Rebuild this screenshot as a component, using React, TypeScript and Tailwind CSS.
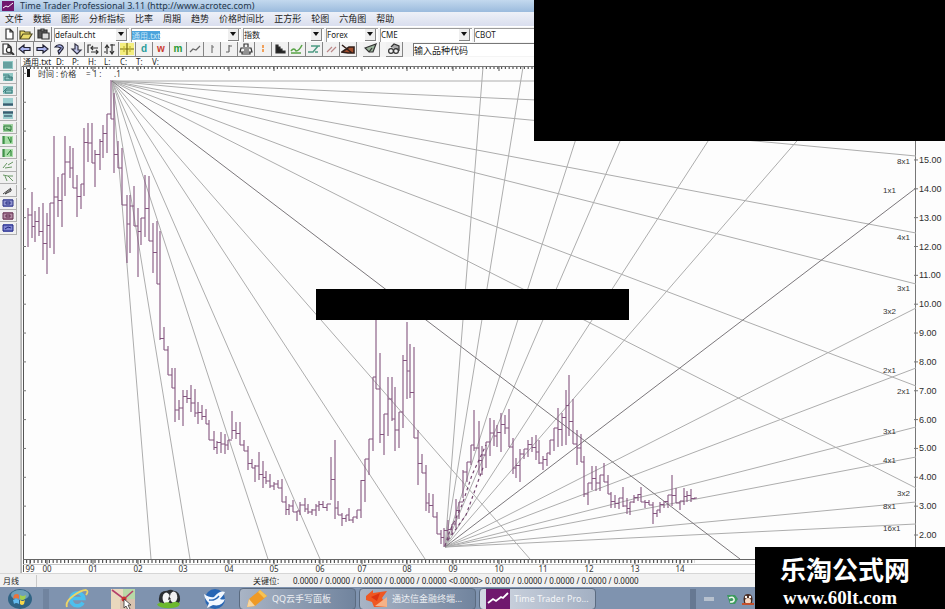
import React from 'react'
import clsx from 'clsx'

const sans = "font-['Noto_Sans','Noto_Sans_CJK_SC',sans-serif]"

const menus = ['文件', '数据', '图形', '分析指标', '比率', '周期', '趋势', '价格时间比', '正方形', '轮图', '六角图', '帮助']

// one entry per bar: x, high, low
const bars: number[][] = [
  [28, 208, 247], [32, 192, 238], [35, 211, 242], [39, 207, 236], [43, 203, 260], [47, 213, 274], [50, 203, 248], [54, 136, 254],
  [58, 177, 217], [62, 174, 227], [65, 136, 196], [70, 146, 178], [73, 148, 188], [77, 175, 217], [81, 184, 209], [84, 128, 196],
  [88, 123, 162], [92, 123, 163], [95, 150, 187], [100, 139, 170], [103, 125, 158], [107, 114, 153], [111, 80, 119], [114, 93, 173],
  [118, 141, 168], [122, 148, 205], [127, 195, 263], [130, 195, 253], [134, 186, 226], [138, 208, 277], [141, 218, 245], [145, 175, 237],
  [149, 176, 241], [153, 223, 273], [157, 221, 284], [160, 231, 340], [164, 327, 350], [168, 346, 375], [172, 368, 388], [175, 368, 422],
  [179, 400, 420], [183, 390, 426], [187, 390, 403], [191, 385, 412], [195, 389, 417], [198, 402, 424], [202, 405, 420], [206, 409, 424],
  [209, 420, 440], [214, 431, 450], [217, 441, 454], [221, 432, 453], [225, 434, 454], [228, 440, 450], [232, 411, 439], [236, 422, 439],
  [240, 422, 445], [244, 440, 451], [248, 446, 470], [252, 459, 468], [255, 465, 482], [259, 452, 480], [263, 461, 488], [266, 471, 484],
  [270, 474, 488], [274, 482, 490], [278, 480, 488], [282, 479, 502], [286, 496, 515], [289, 504, 515], [293, 500, 512], [297, 511, 521],
  [300, 502, 515], [305, 498, 512], [308, 504, 514], [312, 509, 515], [316, 504, 516], [319, 501, 511], [323, 501, 508], [327, 504, 511],
  [331, 457, 500], [335, 440, 519], [338, 501, 515], [342, 513, 526], [346, 515, 522], [349, 508, 521], [353, 517, 523], [357, 510, 519],
  [361, 480, 518], [365, 459, 502], [369, 439, 475], [373, 377, 451], [376, 320, 389], [380, 353, 443], [384, 414, 455], [388, 377, 436],
  [392, 377, 421], [395, 387, 451], [399, 412, 448], [403, 355, 428], [407, 322, 399], [410, 344, 398], [414, 347, 438], [418, 430, 485],
  [422, 454, 473], [426, 465, 511], [429, 493, 513], [433, 494, 517], [437, 512, 534], [441, 530, 544], [444, 528, 547], [448, 520, 541],
  [452, 524, 535], [456, 499, 528], [459, 502, 519], [463, 470, 498], [467, 462, 482], [471, 445, 465], [474, 410, 451], [479, 421, 475],
  [482, 446, 475], [486, 442, 468], [490, 418, 456], [494, 420, 446], [497, 425, 447], [501, 413, 452], [505, 415, 434], [509, 409, 447],
  [513, 438, 474], [516, 458, 478], [520, 449, 482], [524, 449, 459], [528, 440, 457], [532, 437, 452], [536, 435, 460], [539, 440, 464],
  [543, 456, 470], [547, 453, 466], [550, 440, 455], [554, 428, 451], [558, 408, 447], [562, 413, 446], [566, 390, 445], [569, 375, 436],
  [573, 399, 444], [577, 430, 465], [581, 434, 462], [584, 456, 497], [588, 483, 505], [592, 466, 490], [596, 466, 491], [600, 475, 491],
  [604, 463, 482], [608, 475, 494], [611, 492, 508], [615, 495, 508], [619, 498, 509], [623, 487, 507], [627, 498, 514], [630, 502, 515],
  [634, 495, 503], [638, 494, 501], [641, 487, 502], [645, 500, 508], [649, 500, 505], [653, 502, 524], [657, 510, 517], [660, 502, 513],
  [664, 501, 508], [668, 495, 508], [672, 475, 506], [676, 488, 503], [680, 501, 510], [684, 488, 505], [687, 491, 502], [691, 489, 502],
  [695, 498, 499],
]

// Gann fans: far ends of the rays
const topFan = [[916, 81], [916, 117], [916, 156], [916, 233], [916, 284], [916, 386], [916, 488], [530, 559], [425, 559], [320, 559], [268, 559], [190, 559], [151, 559]]
const bottomFan = [[916, 308], [916, 368], [916, 427], [916, 457], [916, 502], [916, 524], [483, 67], [523, 67], [599, 67], [652, 67], [756, 67], [861, 67]]

const rayLabels: [number, number, string][] = [
  [897, 164, '8x1'], [883, 193, '1x1'], [897, 240, '4x1'], [897, 291, '3x1'], [883, 314, '3x2'], [883, 373, '2x1'], [897, 394, '2x1'],
  [883, 434, '3x1'], [883, 463, '4x1'], [897, 496, '3x2'], [883, 509, '8x1'], [883, 531, '16x1'],
]

const years: [number, string][] = [
  [30, '99'], [47, '00'], [93, '01'], [138, '02'], [183, '03'], [229, '04'], [274, '05'], [320, '06'], [362, '07'], [407, '08'],
  [453, '09'], [499, '10'], [543, '11'], [589, '12'], [635, '13'], [680, '14'],
]

const prices = Array.from({ length: 17 }, (_, i) => i + 2)
const priceY = (p: number) => 535 - (p - 2) * 28.85

const barPath = bars
  .map(([x, hi, lo], i) => {
    const next = bars[i + 1]
    if (!next) return `M${x} ${hi}V${lo}M${x - 1} ${hi}h3`
    const close = Math.max(hi, Math.min(lo, (next[1] + next[2]) / 2))
    return `M${x} ${hi}V${lo}M${x} ${close}H${next[0]}`
  })
  .join('')

const GannChart = () => (
  <svg viewBox="21 66 924 507" className="block w-full bg-[#fdfdfd]" role="img" aria-label="Gann chart">
    <path d="M22 66.5H916" stroke="#777" />
    <path d="M26 68H916" stroke="#555" strokeWidth="2" strokeDasharray="1.2 2.6" />
    <path d="M23.5 67V572" stroke="#555" />
    <path d="M21.5 66V573" stroke="#b4b4b4" />
    <path d="M915.5 67V559" stroke="#777" />
    <path d="M23 559.5H945" stroke="#666" />
    <path d="M26 561.5H695" stroke="#555" strokeWidth="3" strokeDasharray="1.2 2.6" />
    <path d="M23 564.5H945" stroke="#c4c4c4" />

    <g stroke="#adadad" strokeWidth="1">
      {topFan.map(([x, y], i) => <line key={i} x1={112} y1={81} x2={x} y2={y} />)}
      {bottomFan.map(([x, y], i) => <line key={i} x1={445} y1={547} x2={x} y2={y} />)}
    </g>
    <g stroke="#7b777b" strokeWidth="1">
      <line x1={112} y1={81} x2={740} y2={559} />
      <line x1={445} y1={547} x2={916} y2={188} />
    </g>

    <path d={barPath} fill="none" stroke="#84557f" strokeWidth="1.1" />
    <path d="M445 546L449 533L462 505L472 475L486 445M448 540L466 515L484 465" fill="none" stroke="#74476f" strokeWidth="1.2" strokeDasharray="3 3" />

    <rect x={27} y={69} width={3} height={8} fill="#111" />
    <g fontFamily="Noto Sans, Noto Sans CJK SC, sans-serif" fontSize="8" fill="#333">
      <text x={38} y={77}>时间 : 价格</text>
      <text x={86} y={77}>= 1 :</text>
      <text x={114} y={77}>.1</text>
      {years.map(([x, label]) => (
        <g key={label}>
          <path d={x < 40 ? `M${x} 560v4` : `M${x} 560v4M${x} 67v4`} stroke="#555" />
          <text x={x} y={572} textAnchor="middle">{label}</text>
        </g>
      ))}
    </g>
    <g fontFamily="Liberation Sans, sans-serif" fontSize="9" fill="#2d2d2d">
      {prices.map((p) => (
        <g key={p}>
          <path d={`M914 ${priceY(p)}h4M23 ${priceY(p)}h3`} stroke="#777" />
          <text x={919} y={priceY(p) + 3}>{p.toFixed(2)}</text>
        </g>
      ))}
    </g>
    <g fontFamily="Liberation Sans, sans-serif" fontSize="8" fill="#333">
      {rayLabels.map(([x, y, label]) => <text key={`${x}-${y}`} x={x} y={y}>{label}</text>)}
    </g>
    <rect x={316} y={289} width={313} height={31} fill="#000" />
  </svg>
)

const Glyph = ({ children }: { children: React.ReactNode }) => (
  <svg viewBox="0 0 14 12" className="h-3 w-3.5 shrink-0" fill="none" stroke="#333" strokeWidth="1.2">{children}</svg>
)

const letter = (char: string, color: string) => (
  <span className={clsx("font-['Liberation_Sans',sans-serif] text-[10px] leading-3 font-bold", color)}>{char}</span>
)

const tools: [string, React.ReactNode][] = [
  ['Preview', <Glyph><path d="M2 11V1h5l3 3v7zM7 1v3h3" fill="#fff" /><circle cx="8" cy="7" r="2.6" /><path d="M10 9l3 3" strokeWidth="2" /></Glyph>],
  ['Back', <Glyph><path d="M1 6l5-4v2.5h6v3H6V10z" fill="#aab4ee" stroke="#223" /></Glyph>],
  ['Forward', <Glyph><path d="M13 6L8 2v2.5H2v3h6V10z" fill="#aab4ee" stroke="#223" /></Glyph>],
  ['Up', <Glyph><path d="M3 4q2-3 6-2q4 2 1 5l-3 4l-1-3l3-3l-3-1z" fill="#aab4ee" stroke="#223" /></Glyph>],
  ['Down', <Glyph><path d="M6 1v5H3l5 5l4-4H9V3z" fill="#c4c9ee" stroke="#334" /></Glyph>],
  ['Shrink', <Glyph><path d="M2 10V2h3M5 5h7M7 3L5 5l2 2M5 9h7M10 7l2 2l-2 2" /></Glyph>],
  ['Scale', <Glyph><path d="M4 11V3M2 5l2-3l2 3M9 1v9M7 8l2 3l2-3M7 2h5M1 9h2" /></Glyph>],
  ['Crosshair', <Glyph><rect width="14" height="12" fill="#f4ee7e" stroke="none" /><path d="M7 0v12M0 6h14" stroke="#776d15" /><path d="M4 3v6M10 3v6" stroke="#c4b932" /></Glyph>],
  ['Daily', letter('d', 'text-[#2a9c9c]')],
  ['Weekly', letter('w', 'text-[#cc3b30]')],
  ['Monthly', letter('m', 'text-[#299a35]')],
  ['Line', <Glyph><path d="M2 9l3-3l3 1l4-4" stroke="#666" /></Glyph>],
  ['Bar', <Glyph><path d="M7 2v8M7 4h2" stroke="#777" /></Glyph>],
  ['Candle', <Glyph><path d="M7 2v7M7 3h3M4 9h3" stroke="#666" /></Glyph>],
  ['Print', <Glyph><path d="M5 4V1h4v3M2 5h10l1 4H1zM3 9v2h8V9M5 7h5" /></Glyph>],
  ['Marker', <Glyph><path d="M7 2v8" stroke="#f1a05a" strokeWidth="2" strokeDasharray="3 1" /></Glyph>],
  ['Histogram', <Glyph><path d="M3 2v8h9V8H9V6H7V4H5V2z" fill="#222" /></Glyph>],
  ['Study', <Glyph><path d="M1 8q3-4 5 0q3 0 6-6M1 10h10" stroke="#58a345" strokeWidth="1.5" /></Glyph>],
  ['Trend', <Glyph><path d="M1 9h5l5-6M4 3h9M8 9h3" stroke="#4c9a82" strokeWidth="1.5" /></Glyph>],
  ['Parallel', <Glyph><path d="M3 9l5-5M7 9l5-5" stroke="#b88" /></Glyph>],
  ['Delete', <Glyph><path d="M1 2l10 8M1 9l7-5h5v6H7z" fill="#a34e2c" stroke="#33201a" strokeWidth="1.6" /></Glyph>],
]

const Tool = ({ label, children }: { label: string, children: React.ReactNode }) => (
  <button aria-label={label} className="flex h-[15px] w-[17px] shrink-0 items-center justify-center border-r border-b border-[#858585] bg-[#f1f1f1]">
    {children}
  </button>
)

const Combo = ({ label, value, width, picked }: { label: string, value: string, width: string, picked?: boolean }) => (
  <div className={clsx('relative h-[14px] shrink-0 border-t border-l border-[#9b9b9b] bg-white', width)}>
    <select aria-label={label} className="block h-3 w-full appearance-none bg-transparent text-[8px] leading-3 text-[#222]">
      <option>{value}</option>
    </select>
    {picked && <span aria-hidden="true" className="absolute top-0.5 left-0 h-[9px] w-7 bg-[#4ba3dc] text-[8px] leading-[9px] whitespace-nowrap text-[#c2e4f7]">{value}</span>}
    <span className="pointer-events-none absolute top-0 right-0.5 flex h-3 w-[11px] items-center justify-center border-r border-b border-[#858585] bg-[#efefef]">
      <svg viewBox="0 0 6 4" className="h-1 w-1.5"><path d="M0 0h6L3 4z" fill="#111" /></svg>
    </span>
  </div>
)

const sideIcons: [string, string, string][] = [
  ['#8fc7c4', '#3a7b7b', 'M2 3h9M2 5h9M2 7h9'],
  ['#8fc7c4', '#3a7b7b', 'M2 3h6v3h4M4 5h7v3H4z'],
  ['#8fc7c4', '#3a7b7b', 'M2 7l4-4h6M4 8h7V5H5z'],
  ['#9ccfd0', '#1b3650', 'M2 7h10M2 8h10'],
  ['#9ccfd0', '#1b3650', 'M2 2h10M2 3h10M3 6h8'],
  ['#9fd0a0', '#2c7b3a', 'M3 3h7v4H3zM5 5l5 3'],
  ['#a9dda8', '#1f7a2a', 'M2 1v8M3 1v8M7 2l3 6M10 2v5'],
  ['#a9dda8', '#1f7a2a', 'M2 1v8M3 1v8M6 7l4-5M10 3v5'],
  ['#f1f1f1', '#679663', 'M2 8l4-5M4 8l7-1M7 5l5-3'],
  ['#f1f1f1', '#679663', 'M2 2l5 1l5 5M4 3l2 5M7 3h5'],
  ['#f1f1f1', '#444444', 'M2 8l8-6M4 8l6-5v2z'],
  ['#8f93cf', '#2d3283', 'M2 2h10v6H2zM5 4h4v2H5z'],
  ['#b58ba5', '#60304f', 'M2 2h10v6H2zM5 4h4v2H5z'],
  ['#7d83d2', '#20267e', 'M2 2h10v6H2zM4 6l3-2l3 1'],
]

const TaskButton = ({ title, active, children }: { title: string, active?: boolean, children: React.ReactNode }) => (
  <button className={clsx('flex h-[22px] w-[117px] items-center gap-1 rounded-sm border border-[#5b6b80] pl-1.5 text-[9px] whitespace-nowrap text-white', active ? 'bg-linear-to-r from-[#d3d9e3] to-[#a3b0c3]' : 'bg-linear-to-r from-[#a9b4c5] to-[#71849e]')}>
    {children}
    <span className="opacity-85">{title}</span>
  </button>
)

const Taskbar = () => (
  <footer className="flex h-[23px] items-center bg-[#7f93af]">
    <button aria-label="Start" className="ml-2 w-6">
      <svg viewBox="0 0 24 22" className="h-[22px] w-6">
        <ellipse cx="12" cy="11" rx="12" ry="10" fill="#2f6384" />
        <ellipse cx="12" cy="7" rx="9" ry="5" fill="#6fa0b8" />
        <path d="M6 7q3-2 5 0v4q-3-2-6 0z" fill="#e9733c" />
        <path d="M12 7q3 2 6 0l-1 4q-3 2-5 0z" fill="#a2cf4d" />
        <path d="M5 12q3-2 6 0v4q-3-2-5 0z" fill="#62b9ec" />
        <path d="M12 12q3 2 5 0l-1 4q-2 2-4 0z" fill="#f6d64b" />
      </svg>
    </button>
    <span className="ml-[11px] h-5 w-1.5 bg-[#71849f]" />
    <div className="ml-4 flex items-center gap-[22px]">
      <button aria-label="Internet Explorer">
        <svg viewBox="0 0 24 22" className="block h-[22px] w-6" fill="none">
          <path d="M18 14.5a6.5 6.5 0 1 1 .8-4H7" stroke="#4cc0ee" strokeWidth="3.6" />
          <path d="M2 19q-2-5 6-11t13-6q3 1 0 5" stroke="#edd566" strokeWidth="1.8" />
        </svg>
      </button>
      <button aria-label="Chart tools">
        <svg viewBox="0 0 24 22" className="block h-[22px] w-6">
          <path d="M0 1h12v20H0z" fill="#e9d8bd" /><path d="M12 1h12v20H12z" fill="#b8d9a7" /><path d="M9 11h15v10H9z" fill="#d9c3b0" />
          <path d="M1 2l12 9l9-8" fill="none" stroke="#b5406b" strokeWidth="1.6" /><circle cx="13" cy="11" r="2.5" fill="#c33" />
          <path d="M13 11v9l2-2l2 4l2-1l-2-4h3z" fill="#fff" stroke="#333" strokeWidth="0.8" />
        </svg>
      </button>
      <button aria-label="Messenger">
        <svg viewBox="0 0 26 22" className="block h-[22px] w-6">
          <path d="M2 11q0-9 9-9q4-2 7 0q7 1 7 9q0 4-3 5H5q-3-1-3-5z" fill="#2a2e31" />
          <ellipse cx="10" cy="10" rx="4" ry="6" fill="#f5f5f5" /><ellipse cx="18" cy="9" rx="4" ry="6" fill="#f0f0f0" />
          <path d="M13 8l2 3l-3 1z" fill="#222" />
          <path d="M0 17q4-4 7-1q4-3 8 0q5-4 10 0q-1 5-12 5T0 17z" fill="#6cb92d" />
        </svg>
      </button>
      <button aria-label="Mail">
        <svg viewBox="0 0 24 22" className="block h-[22px] w-6">
          <circle cx="12" cy="11" r="10" fill="#2866b4" />
          <path d="M1 6q6 4 10 3q6-7 11-5q-1 3-5 7q3 1 5 0q-3 8-12 6l-6 3l2-5q-4-3-5-9z" fill="#f2f8ff" />
          <path d="M6 12q6 1 10-4" fill="none" stroke="#2866b4" strokeWidth="1.4" />
        </svg>
      </button>
    </div>
    <div className="ml-3 flex gap-[3px]">
      <TaskButton title="QQ云手写面板">
        <svg viewBox="0 0 22 20" className="h-5 w-[22px] shrink-0"><path d="M1 18l2-8L14 1l7 6L9 17z" fill="#ef9a26" /><path d="M1 18l2-8l6 7z" fill="#f6d5a0" /><path d="M14 1l7 6l-3 2l-6-6z" fill="#f7c353" /></svg>
      </TaskButton>
      <TaskButton title="通达信金融终端...">
        <svg viewBox="0 0 22 20" className="h-5 w-[22px] shrink-0"><path d="M0 7l7-6v3l14-2l-5 7l5 9H8L6 13l-6-2z" fill="#ef5722" /><path d="M9 17l12-9v10z" fill="#f5b287" /><path d="M5 8l9-4l-3 8z" fill="#dc3412" /></svg>
      </TaskButton>
      <TaskButton title="Time Trader Pro..." active>
        <svg viewBox="0 0 24 20" className="h-5 w-6 shrink-0"><path d="M0 0h24v20H0z" fill="#70186d" /><path d="M2 14l5-4l3 2l5-4l2 1l5-5" fill="none" stroke="#fff" strokeWidth="1.8" /></svg>
      </TaskButton>
    </div>
    <span className="ml-[94px] h-5 w-1.5 bg-[#667892]" />
    <div className="ml-2 flex items-center gap-2">
      <span className="mr-1 h-1 w-2.5 bg-[#b7c1ce]" />
      <svg viewBox="0 0 12 12" className="h-3 w-3"><path d="M1 2h8l3 4l-3 5H4z" fill="#3d9a60" /><path d="M3 5q4-2 5 1t-4 3" fill="none" stroke="#eef8ee" strokeWidth="1.6" /></svg>
      <svg viewBox="0 0 12 12" className="-ml-1 h-3 w-3"><path d="M2 10Q0 1 6 1t4 9z" fill="#47291f" /><ellipse cx="6" cy="8" rx="3" ry="3" fill="#f6d9c4" /><path d="M0 10h12v2H0z" fill="#c4502d" /><circle cx="4" cy="4" r="1.2" fill="#fff" /><circle cx="8" cy="4" r="1.2" fill="#fff" /></svg>
    </div>
  </footer>
)

const App = () => {
  return (
    <div className={clsx('relative w-full overflow-hidden bg-[#f0f0f0] text-[#222]', sans)}>
      <header className="flex h-3 items-center gap-1.5 bg-linear-to-b from-[#c3d9ee] to-[#9bbbdd] pl-0.5">
        <svg viewBox="0 0 12 10" className="h-2.5 w-3"><path d="M0 0h12v10H0z" fill="#70186d" /><path d="M1 7l3-2l2 1l5-4" fill="none" stroke="#fff" /></svg>
        <h1 className="text-[9px] leading-3 whitespace-nowrap text-[#23364b]">Time Trader Professional 3.11 (http://www.acrotec.com)</h1>
      </header>

      <nav className="flex h-[14px] items-center gap-2.5 bg-linear-to-b from-[#eef1f8] to-[#d9deee] pl-[5px] text-[9px]">
        {menus.map((menu) => (
          <button key={menu} className="leading-[14px] whitespace-nowrap">{menu}</button>
        ))}
      </nav>

      <div className="flex h-4 items-center gap-0.5 overflow-hidden border-t border-white bg-[#f4f4f4] pl-px">
        <div className="flex w-[51px] shrink-0">
          <Tool label="New"><Glyph><path d="M4 1h4l3 3v7H4zM8 1v3h3" fill="#fff" /></Glyph></Tool>
          <Tool label="Open"><Glyph><path d="M1 11V3h4l1 1h5v2M1 11l3-5h9l-3 5z" fill="#e9da6a" stroke="#4c4720" /></Glyph></Tool>
          <Tool label="Paste"><Glyph><path d="M2 2h9v8H2z" fill="#555" /><path d="M6 5h7v6H6z" fill="#ddd" /><path d="M5 1h3v2H5z" fill="#aaa" /></Glyph></Tool>
        </div>
        <Combo label="Chart" value="default.cht" width="w-[75px]" />
        <Combo label="Series" value="通用.txt" width="w-[110px]" picked />
        <Combo label="Index" value="指数" width="w-[81px]" />
        <Combo label="Market" value="Forex" width="w-[52px]" />
        <Combo label="Exchange" value="CME" width="w-[92px]" />
        <Combo label="Board" value="CBOT" width="w-[92px]" />
      </div>

      <div className="flex h-[15px] items-center overflow-hidden bg-[#f4f4f4]">
        {tools.map(([label, icon]) => <Tool key={label} label={label}>{icon}</Tool>)}
        <div className="ml-1.5 flex gap-1.5">
          <Tool label="Send"><Glyph><path d="M1 5l11-4l-3 8H5z" fill="#9bb49b" /><path d="M5 9l3-4" /></Glyph></Tool>
          <Tool label="Find"><Glyph><path d="M4 4l3-3l5 2v5" fill="#aaa" /><circle cx="4" cy="8" r="2.4" /><circle cx="9" cy="8" r="2.4" /></Glyph></Tool>
        </div>
        <input aria-label="品种代码" defaultValue="输入品种代码" className="ml-2.5 h-[13px] min-w-0 flex-1 border-t border-l border-[#777] bg-white text-[9px] leading-3 text-[#222] outline-none" />
      </div>

      <main className="flex items-stretch">
        <aside className="w-[21px] shrink-0 border-r border-[#c5c5c5]">
          <div className="flex h-[178px] w-[17px] flex-col justify-between pt-0.5">
            {sideIcons.map(([fill, stroke, d], i) => (
              <button key={i} aria-label={`Tool ${i + 1}`} className="flex h-3 items-center justify-center border-r border-b border-[#b0b0b0]">
                <svg viewBox="0 0 14 10" className="h-2.5 w-3.5"><path d="M2 1h10v8H2z" fill={fill} /><path d={d} fill="none" stroke={stroke} /></svg>
              </button>
            ))}
          </div>
        </aside>
        <section className="min-w-0 flex-1">
          <div className="flex h-[9px] items-center bg-[#fdfdfd] pl-0.5 text-[8px] leading-[9px] whitespace-nowrap">
            <span className="w-[33px]">通用.txt</span>
            {['D:', 'P:', 'H:', 'L:', 'C:', 'T:', 'V:'].map((field) => <span key={field} className="w-4">{field}</span>)}
          </div>
          <GannChart />
        </section>
      </main>

      <div className="flex h-[14px] items-center overflow-hidden border-t border-[#d6d6d6] bg-[#f1f1f1] pl-[3px] text-[8px] whitespace-nowrap">
        <span className="w-[34px] border-r border-[#c9c9c9] leading-3">月线</span>
        <span className="ml-[216px] w-10">关键位:</span>
        <span>0.0000 / 0.0000 / 0.0000 / 0.0000 / 0.0000 &lt;0.0000&gt; 0.0000 / 0.0000 / 0.0000 / 0.0000 / 0.0000</span>
      </div>

      <Taskbar />

      <div className="absolute top-0 right-0 h-[141px] w-[411px] bg-black" />
      <div className="absolute right-0 bottom-0 flex h-[63px] w-[190px] flex-col items-center bg-black pt-1 pr-5 text-white">
        <strong className="pl-2.5 font-['Noto_Sans_CJK_SC',sans-serif] text-[26px] leading-9 font-bold whitespace-nowrap">乐淘公式网</strong>
        <a href="#" className="font-['Liberation_Serif',serif] text-[19px] leading-[21px] font-bold">www.60lt.com</a>
      </div>
    </div>
  )
}

export default App
